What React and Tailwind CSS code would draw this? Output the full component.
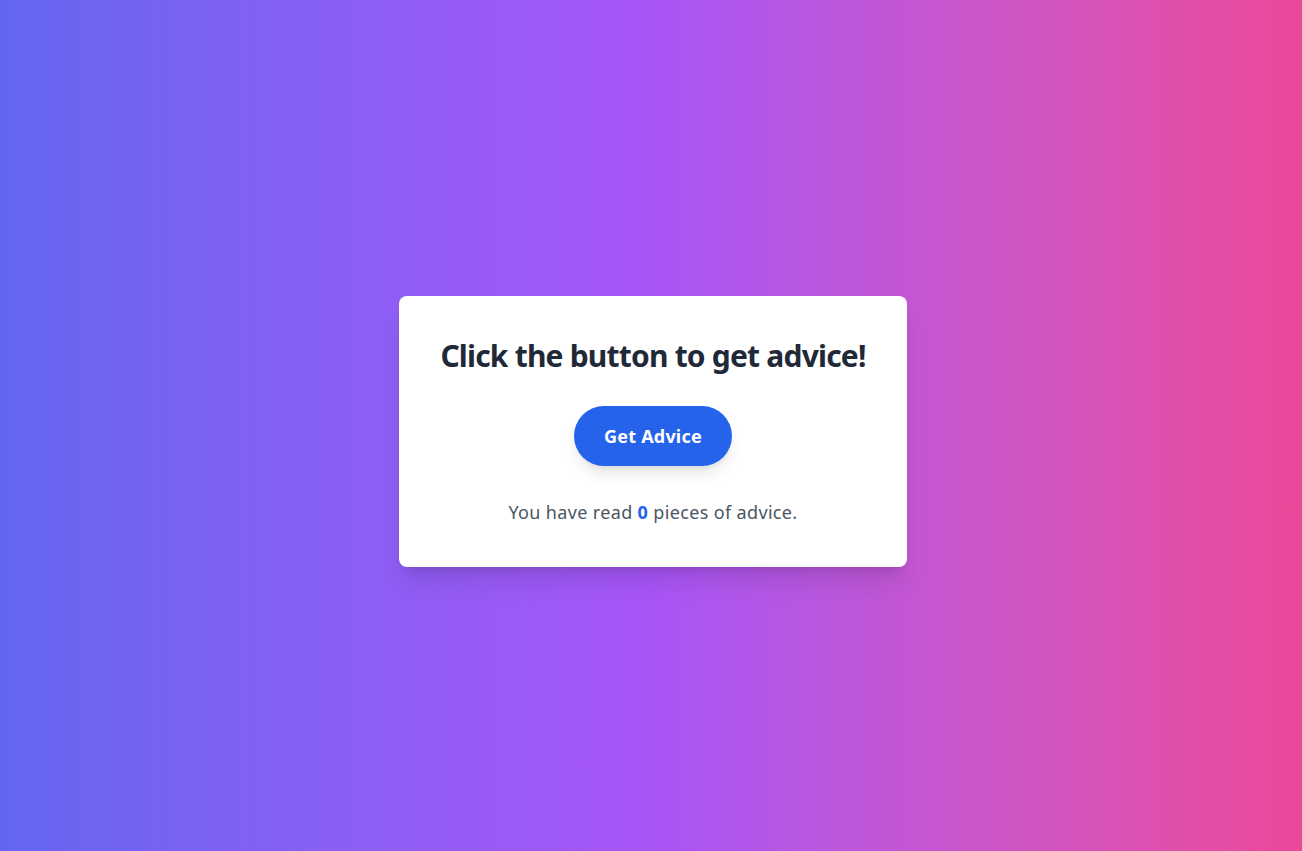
export default function App() {
  return (
    <div
      className="min-h-screen w-full flex items-center justify-center pl-[4px] pt-[11px] bg-gradient-to-r from-[#6366f1] via-[#a855f7] to-[#ec4899]"
      style={{ fontFamily: '"Segoe UI", "Noto Sans", "Open Sans", sans-serif' }}
    >
      <div className="w-[508px] bg-white rounded-lg shadow-xl px-10 pt-[42px] pb-[41px] text-center">
        <h1 className="text-3xl font-bold text-[#1f2937] mb-8 whitespace-nowrap tracking-[-0.8px]">Click the button to get advice!</h1>
        <button className="bg-[#2563eb] text-white text-lg font-bold px-[30px] py-4 rounded-full shadow-lg tracking-[0.2px]">
          Get Advice
        </button>
        <p className="mt-8 text-lg text-[#4b5563] tracking-[0.35px]">
          You have read <span className="font-bold text-[#2563eb]">0</span> pieces of advice.
        </p>
      </div>
    </div>
  );
}
